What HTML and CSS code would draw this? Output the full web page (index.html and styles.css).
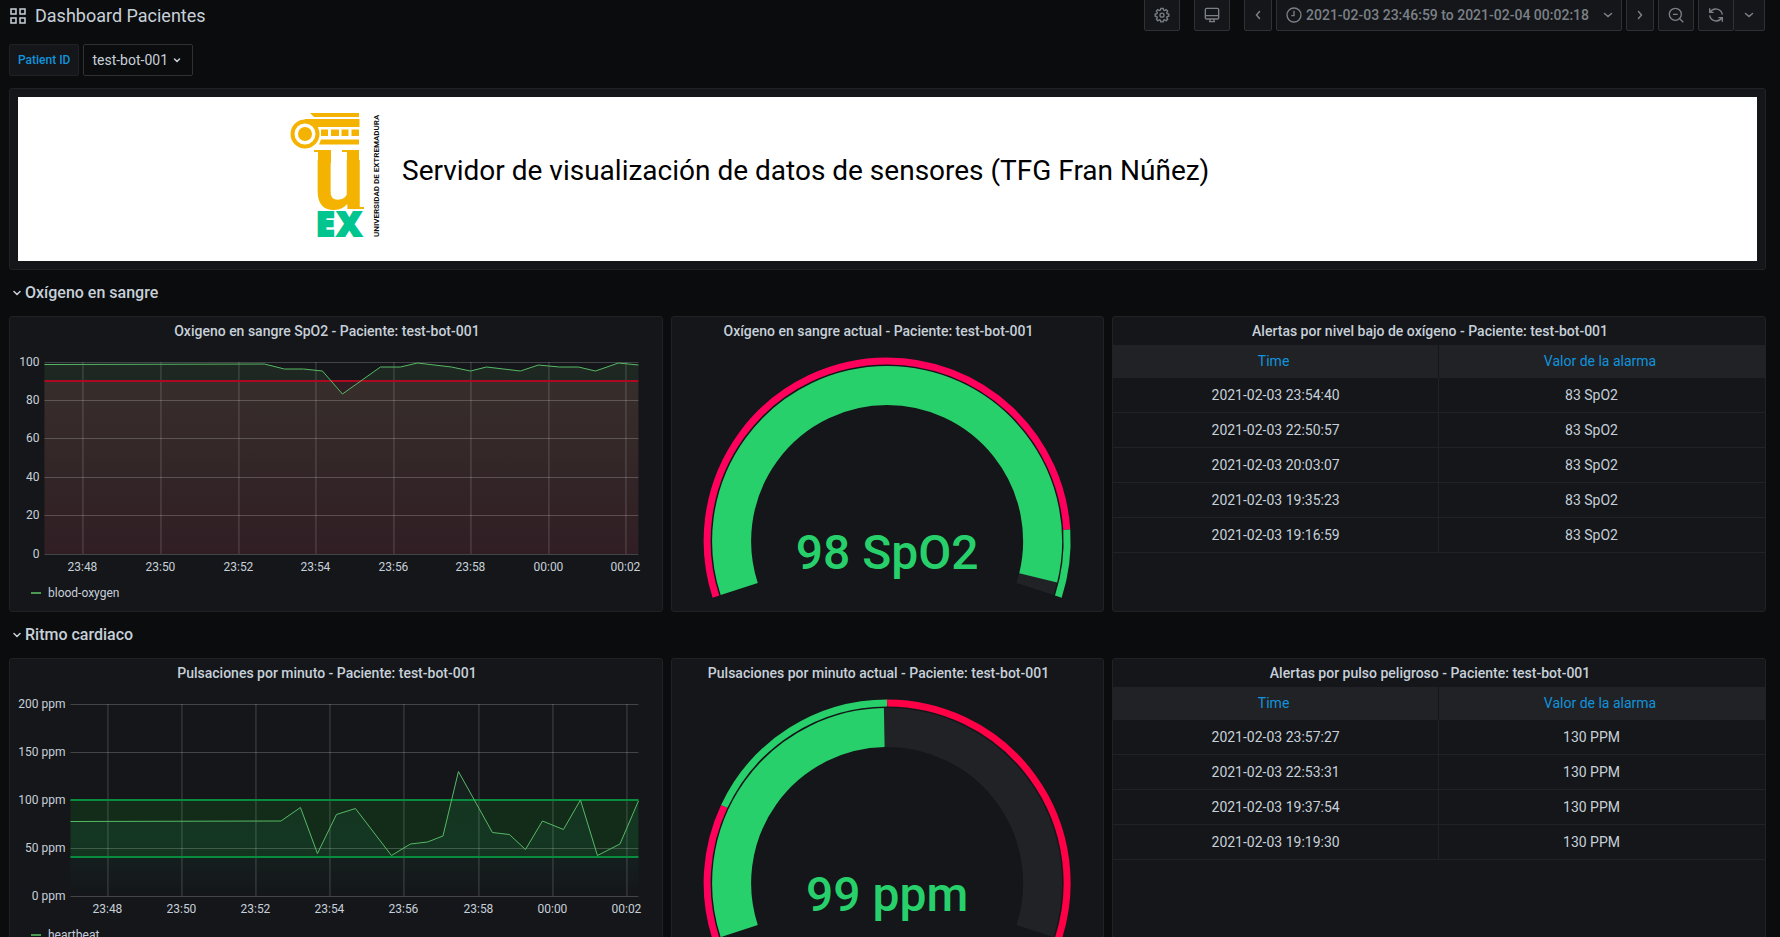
FILE: index.html
```html
<!DOCTYPE html>
<html lang="es">
<head>
<meta charset="utf-8">
<title>Dashboard Pacientes</title>
<link rel="stylesheet" href="styles.css">
</head>
<body>
<div class="dashboard">
  <header class="navbar">
    <div class="navbar-title">
      <svg class="icon icon-apps" viewBox="0 0 16 16" aria-hidden="true"><path d="M1 1h5v5H1zM10 1h5v5h-5zM1 10h5v5H1zM10 10h5v5h-5z"/></svg>
      <h1>Dashboard Pacientes</h1>
    </div>
    <div class="toolbar">
      <button class="tool tool-wide" type="button" aria-label="Ajustes">
        <svg class="icon" viewBox="0 0 24 24" aria-hidden="true"><path d="M10.300 2h3.400l.6 2.700 1.500.7 2.400-1.500 2.300 2.300-1.500 2.400.7 1.500 2.500.5v3.300l-2.500.6-.7 1.500 1.500 2.400-2.300 2.300-2.400-1.500-1.500.7-.6 2.500h-3.400l-.6-2.500-1.500-.7-2.400 1.500-2.300-2.300L5 16l-.7-1.500-2.500-.6v-3.300l2.500-.5L5 8.600 3.500 6.200l2.300-2.300 2.400 1.500 1.500-.7z"/><circle cx="12" cy="12.200" r="3"/></svg>
      </button>
      <button class="tool tool-wide" type="button" aria-label="Modo TV">
        <svg class="icon" viewBox="0 0 24 24" aria-hidden="true"><rect x="2" y="2" width="20" height="16" rx="2"/><path d="M2 13h20M9 18v4M15 18v4M7.500 22h9"/></svg>
      </button>
      <div class="tool-group">
        <button class="tool tool-narrow" type="button" aria-label="Atrás"><svg class="icon" viewBox="0 0 16 16" aria-hidden="true"><path class="chevron" d="M9.500 4.500L6.500 8l3 3.500"/></svg></button>
        <button class="tool tool-range" type="button">
          <svg class="icon" viewBox="0 0 24 24" aria-hidden="true"><circle cx="12" cy="12" r="10.500"/><path d="M12 5.500V13H8"/></svg>
          <span>2021-02-03 23:46:59 to 2021-02-04 00:02:18</span>
          <svg class="icon range-caret" viewBox="0 0 16 16" aria-hidden="true"><path class="chevron" d="M4.500 6.500L8 9.500l3.500-3"/></svg>
        </button>
        <button class="tool tool-narrow" type="button" aria-label="Adelante"><svg class="icon" viewBox="0 0 16 16" aria-hidden="true"><path class="chevron" d="M6.500 4.500L9.500 8l-3 3.500"/></svg></button>
        <button class="tool tool-wide" type="button" aria-label="Alejar"><svg class="icon" viewBox="0 0 24 24" aria-hidden="true"><circle cx="11" cy="11" r="9"/><path d="M7.500 11h7M17.500 17.500L23 23"/></svg></button>
        <div class="split">
          <button class="tool tool-wide" type="button" aria-label="Actualizar"><svg class="icon" viewBox="0 0 24 24" aria-hidden="true"><path d="M2.500 2v6h6M3 8a10 10 0 0 1 18.500 3.500M21.500 22v-6h-6M21 16A10 10 0 0 1 2.500 12.500"/></svg></button>
          <button class="tool tool-caret" type="button" aria-label="Intervalo"><svg class="icon" viewBox="0 0 16 16" aria-hidden="true"><path class="chevron" d="M4.500 6.500L8 9.500l3.500-3"/></svg></button>
        </div>
      </div>
    </div>
  </header>

  <div class="variables">
    <label class="variable-label" for="patient">Patient ID</label>
    <div class="variable-field">
      <select class="variable-select" id="patient"><option>test-bot-001</option></select>
      <svg class="variable-caret" viewBox="0 0 8 8" aria-hidden="true"><path class="chevron" d="M1.500 3L4 5.500 6.500 3"/></svg>
    </div>
  </div>

  <main class="grid">
    <section class="panel panel-banner">
      <div class="banner">
        <svg class="logo" viewBox="0 0 92 126" role="img" aria-label="Universidad de Extremadura">
          <g fill="#f5b301">
            <path d="M20 1h49v4H24z"/>
            <path d="M14 7h55.500v8H27z"/>
            <path d="M31 17.500h7v6.500h-7zM41 17.500h8v6.500h-8zM51.500 17.500h7v6.500h-7zM61.500 17.500h7.500v6.500h-7.500z"/>
            <path d="M31 27.500h38v5H29z"/>
            <circle cx="15" cy="22" r="7"/>
            <rect x="24" y="38" width="17" height="2"/>
            <rect x="28" y="38" width="13" height="13"/>
            <rect x="52" y="38" width="17" height="2"/>
            <rect x="57" y="38" width="12" height="13"/>
            <rect x="66" y="95" width="8" height="2"/>
            <text class="logo-u" x="23" y="97">u</text>
          </g>
          <circle cx="15" cy="22" r="12.500" fill="none" stroke="#f5b301" stroke-width="4"/>
          <text class="logo-ex" x="26 47" y="124">EX</text>
          <text class="logo-name" transform="translate(89 125) rotate(-90)">UNIVERSIDAD DE EXTREMADURA</text>
        </svg>
        <h2>Servidor de visualización de datos de sensores (TFG Fran Núñez)</h2>
      </div>
    </section>

    <button class="row-title" type="button"><svg viewBox="0 0 8 8" aria-hidden="true"><path class="chevron" d="M1 2.500l3 3 3-3"/></svg>Oxígeno en sangre</button>

    <section class="panel panel-wide">
      <h3>Oxigeno en sangre SpO2 - Paciente: test-bot-001</h3>
      <svg class="chart" viewBox="0 0 635 224" role="img" aria-label="blood-oxygen">
        <defs>
          <linearGradient id="oxygen-fill" x1="0" y1="0" x2="0" y2="1"><stop offset="0" stop-color="#73bf69" stop-opacity=".11"/><stop offset="1" stop-color="#73bf69" stop-opacity="0"/></linearGradient>
        </defs>
        <path fill="#fd597d" fill-opacity=".12" d="M26 36h594v173H26z"/>
        <path fill="url(#oxygen-fill)" d="M26 19.500L246 19l20 5h19l19 2 20 23 38-27h20l17-4 34 4 19 4 16-4 34 4 18-6 21 2h19l17 4 23-8 20 2V209H26z"/>
        <path class="gridline" d="M26 17.500h594M26 55.500h594M26 93.500h594M26 132.500h594M26 170.500h594M26 209.500h594M64.500 17v192M142.500 17v192M220.500 17v192M297.500 17v192M375.500 17v192M452.500 17v192M530.500 17v192M607.500 17v192"/>
        <path class="limit-red" d="M26 36h594"/>
        <path class="series" d="M26 19.500L246 19l20 5h19l19 2 20 23 38-27h20l17-4 34 4 19 4 16-4 34 4 18-6 21 2h19l17 4 23-8 20 2"/>
        <g class="y-axis"><text x="21" y="21">100</text><text x="21" y="59">80</text><text x="21" y="97">60</text><text x="21" y="136">40</text><text x="21" y="174">20</text><text x="21" y="213">0</text></g>
        <g class="x-axis"><text x="64" y="226">23:48</text><text x="142" y="226">23:50</text><text x="220" y="226">23:52</text><text x="297" y="226">23:54</text><text x="375" y="226">23:56</text><text x="452" y="226">23:58</text><text x="530" y="226">00:00</text><text x="607" y="226">00:02</text></g>
      </svg>
      <p class="legend"><i></i>blood-oxygen</p>
    </section>

    <section class="panel panel-mid">
      <h3>Oxígeno en sangre actual - Paciente: test-bot-001</h3>
      <svg class="gauge" viewBox="0 0 415 258" role="img" aria-label="98 SpO2">
        <path class="track" d="M59.100 244.100A155.500 155.500 0 1 1 354.900 244.100"/>
        <path class="value" pathLength="100" stroke-dasharray="98 200" d="M59.100 244.100A155.500 155.500 0 1 1 354.900 244.100"/>
        <path class="ring danger" pathLength="100" stroke-dasharray="90 200" d="M35.800 251.600A180 180 0 1 1 378.200 251.600"/>
        <path class="ring ok" pathLength="100" stroke-dasharray="0 90 10 100" d="M35.800 251.600A180 180 0 1 1 378.200 251.600"/>
        <text class="reading" x="207" y="224">98 SpO2</text>
      </svg>
    </section>

    <section class="panel panel-wide panel-table">
      <h3>Alertas por nivel bajo de oxígeno - Paciente: test-bot-001</h3>
      <table>
        <thead><tr><th>Time</th><th>Valor de la alarma</th></tr></thead>
        <tbody>
          <tr><td>2021-02-03 23:54:40</td><td>83 SpO2</td></tr>
          <tr><td>2021-02-03 22:50:57</td><td>83 SpO2</td></tr>
          <tr><td>2021-02-03 20:03:07</td><td>83 SpO2</td></tr>
          <tr><td>2021-02-03 19:35:23</td><td>83 SpO2</td></tr>
          <tr><td>2021-02-03 19:16:59</td><td>83 SpO2</td></tr>
        </tbody>
      </table>
    </section>

    <button class="row-title" type="button"><svg viewBox="0 0 8 8" aria-hidden="true"><path class="chevron" d="M1 2.500l3 3 3-3"/></svg>Ritmo cardiaco</button>

    <section class="panel panel-wide">
      <h3>Pulsaciones por minuto - Paciente: test-bot-001</h3>
      <svg class="chart" viewBox="0 0 635 224" role="img" aria-label="heartbeat">
        <defs>
          <linearGradient id="heart-fill" gradientUnits="userSpaceOnUse" x1="0" y1="84" x2="0" y2="209"><stop offset="0" stop-color="#2f9d62" stop-opacity=".08"/><stop offset=".55" stop-color="#189d72" stop-opacity=".09"/><stop offset="1" stop-color="#2f9d62" stop-opacity="0"/></linearGradient>
        </defs>
        <path fill="#0f8f1f" fill-opacity=".18" d="M52 113h568v57H52z"/>
        <path fill="url(#heart-fill)" d="M52 134.500L262.500 134 282 120.500l17 46 19-39 19-6 36 47 19-11.500 17-2 15.500-6L440 84.500l34 61 17 2 16 15 17-28.500 21 8.500 17-29.500 17 55.500 22.500-11.500L620 114V209H52z"/>
        <path class="gridline" d="M52 17.500h568M52 65.500h568M52 113.500h568M52 161.500h568M52 209.500h568M89.500 17v192M163.500 17v192M237.500 17v192M311.500 17v192M385.500 17v192M460.500 17v192M534.500 17v192M608.500 17v192"/>
        <path class="limit-green" d="M52 113h568M52 170h568"/>
        <path class="series" d="M52 134.500L262.500 134 282 120.500l17 46 19-39 19-6 36 47 19-11.500 17-2 15.500-6L440 84.500l34 61 17 2 16 15 17-28.500 21 8.500 17-29.500 17 55.500 22.500-11.500L620 114"/>
        <g class="y-axis"><text x="47" y="21">200 ppm</text><text x="47" y="69">150 ppm</text><text x="47" y="117">100 ppm</text><text x="47" y="165">50 ppm</text><text x="47" y="213">0 ppm</text></g>
        <g class="x-axis"><text x="89" y="226">23:48</text><text x="163" y="226">23:50</text><text x="237" y="226">23:52</text><text x="311" y="226">23:54</text><text x="385" y="226">23:56</text><text x="460" y="226">23:58</text><text x="534" y="226">00:00</text><text x="608" y="226">00:02</text></g>
      </svg>
      <p class="legend"><i></i>heartbeat</p>
    </section>

    <section class="panel panel-mid">
      <h3>Pulsaciones por minuto actual - Paciente: test-bot-001</h3>
      <svg class="gauge" viewBox="0 0 415 258" role="img" aria-label="99 ppm">
        <path class="track" d="M59.100 244.100A155.500 155.500 0 1 1 354.900 244.100"/>
        <path class="value" pathLength="200" stroke-dasharray="99 300" d="M59.100 244.100A155.500 155.500 0 1 1 354.900 244.100"/>
        <path class="ring danger" pathLength="200" stroke-dasharray="40 300" d="M35.800 251.600A180 180 0 1 1 378.200 251.600"/>
        <path class="ring ok" pathLength="200" stroke-dasharray="0 40 60 300" d="M35.800 251.600A180 180 0 1 1 378.200 251.600"/>
        <path class="ring high" pathLength="200" stroke-dasharray="0 100 100 300" d="M35.800 251.600A180 180 0 1 1 378.200 251.600"/>
        <text class="reading" x="207" y="224">99 ppm</text>
      </svg>
    </section>

    <section class="panel panel-wide panel-table">
      <h3>Alertas por pulso peligroso - Paciente: test-bot-001</h3>
      <table>
        <thead><tr><th>Time</th><th>Valor de la alarma</th></tr></thead>
        <tbody>
          <tr><td>2021-02-03 23:57:27</td><td>130 PPM</td></tr>
          <tr><td>2021-02-03 22:53:31</td><td>130 PPM</td></tr>
          <tr><td>2021-02-03 19:37:54</td><td>130 PPM</td></tr>
          <tr><td>2021-02-03 19:19:30</td><td>130 PPM</td></tr>
        </tbody>
      </table>
    </section>
  </main>
</div>
</body>
</html>
```
FILE: styles.css
```css
* { box-sizing: border-box; }

body {
  margin: 0;
  background: #0b0c0e;
  color: #c7d0d9;
  font: 14px/20px Roboto, sans-serif;
}

h1, h2, h3, p { margin: 0; font-weight: 400; }

button, select {
  margin: 0;
  padding: 0;
  color: inherit;
  font: inherit;
}

svg { display: block; flex: none; }

.dashboard {
  height: 100vh;
  overflow: hidden;
  padding: 0 14px 0 9px;
}

.navbar {
  display: flex;
  justify-content: space-between;
  align-items: flex-start;
  height: 45px;
  margin-top: -1px;
}

.navbar-title {
  display: flex;
  align-items: center;
  gap: 9px;
  height: 34px;
  padding-left: 1px;
}

.navbar-title h1 { font-size: 18px; line-height: 24px; }

.icon {
  width: 16px;
  height: 16px;
  fill: none;
  stroke: currentColor;
  stroke-width: 2;
}

.icon-apps { stroke-width: 1.500; }

.chevron {
  fill: none;
  stroke: currentColor;
  stroke-width: 1.500;
  stroke-linecap: round;
}

.toolbar {
  display: flex;
  gap: 14px;
  margin-right: 1px;
  color: #7b8087;
}

.tool-group { display: flex; gap: 4px; }

.split { display: flex; }

.tool {
  display: flex;
  align-items: center;
  justify-content: center;
  height: 32px;
  border: 1px solid #2c3235;
  border-radius: 2px;
  background: #141619;
}

.tool-wide { width: 36px; }
.tool-narrow { width: 28px; }
.tool-caret { width: 31px; border-left: 0; }

.tool-range { padding: 0 5px 0 9px; gap: 4px; font-weight: 500; }
.range-caret { margin-left: 7px; }

.variables {
  display: flex;
  gap: 4px;
  height: 44px;
}

.variable-label {
  height: 32px;
  padding: 0 8px;
  border: 1px solid #202226;
  border-radius: 2px;
  background: #141619;
  color: #1193dc;
  font-size: 12px;
  font-weight: 500;
  line-height: 30px;
}

.variable-field {
  display: grid;
  width: 110px;
  height: 32px;
}

.variable-select {
  grid-area: 1 / 1;
  appearance: none;
  padding: 0 8px;
  border: 1px solid #2c3235;
  border-radius: 2px;
  background: #0b0c0e;
}

.variable-caret {
  grid-area: 1 / 1;
  align-self: center;
  justify-self: end;
  width: 8px;
  height: 8px;
  margin-right: 12px;
}

.grid {
  display: grid;
  grid-template-columns: repeat(24, 1fr);
  gap: 8px;
}

.panel {
  border: 1px solid #202226;
  border-radius: 3px;
  background: #141619;
}

.panel-wide { grid-column: span 9; min-height: 296px; }
.panel-mid { grid-column: span 6; }

.panel h3 {
  padding-right: 18px;
  font-size: 14px;
  font-weight: 500;
  line-height: 28px;
  text-align: center;
}

.panel-banner { grid-column: 1 / -1; padding: 8px; }

.banner {
  display: flex;
  gap: 20px;
  height: 164px;
  padding: 15px 0 0 272px;
  background: #fff;
  color: #000;
}

.banner h2 { padding-top: 41px; font-size: 28px; line-height: 36px; }

.logo { width: 92px; height: 126px; overflow: visible; }
.logo-u { font: 700 92px Roboto, sans-serif; }
.logo-ex {
  fill: #00c58e;
  stroke: #00c58e;
  stroke-width: 2;
  font: 800 34px "Open Sans", sans-serif;
}
.logo-name { fill: #111; font: 700 8px "Liberation Sans Narrow", Roboto, sans-serif; }

.row-title {
  display: flex;
  grid-column: 1 / -1;
  align-items: center;
  gap: 4px;
  height: 30px;
  padding-left: 4px;
  border: 0;
  background: none;
  font-size: 16px;
  font-weight: 500;
}

.row-title svg { width: 8px; height: 8px; }

.chart {
  width: calc(100% - 16px);
  height: 224px;
  margin: 0 8px;
  overflow: visible;
}

.chart text { fill: #c7d0d9; font-size: 12px; }
.y-axis { text-anchor: end; }
.x-axis { text-anchor: middle; }

.gridline { fill: none; stroke: #fff; stroke-opacity: .2; }
.series { fill: none; stroke: #56b866; stroke-width: 1; }
.limit-red { stroke: #ad0a22; stroke-width: 2; }
.limit-green { stroke: #078d3d; stroke-width: 2; }

.legend {
  display: flex;
  align-items: center;
  gap: 7px;
  padding: 14px 21px 0;
  font-size: 12px;
}

.legend i { width: 10px; height: 2px; background: #4a9a52; }

.gauge {
  width: calc(100% - 16px);
  height: 258px;
  margin: 0 8px;
}

.gauge path { fill: none; }
.track { stroke: #202226; stroke-width: 39; }
.value { stroke: #27d06a; stroke-width: 39; }
.ring { stroke-width: 7; }
.danger { stroke: #ff005c; }
.high { stroke: #ff0046; }
.ok { stroke: #27d06a; }

.reading {
  fill: #27d06a;
  font-size: 48px;
  font-weight: 500;
  text-anchor: middle;
}

table {
  width: 100%;
  border-spacing: 0;
  table-layout: fixed;
  text-align: center;
}

th, td { border-right: 1px solid #202226; }
th:last-child, td:last-child { border-right: 0; }

th {
  height: 33px;
  padding: 0 4px 2px 0;
  border-color: #141619;
  background: #202226;
  color: #1193dc;
  font-weight: 400;
}

td { height: 35px; padding: 0; border-bottom: 1px solid #202226; }
td:last-child { padding-right: 21px; }
```
